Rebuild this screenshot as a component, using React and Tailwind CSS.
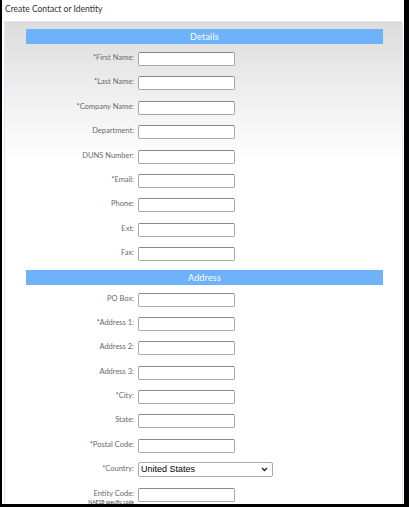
const detailRows = [
  "*First Name:",
  "*Last Name:",
  "*Company Name:",
  "Department:",
  "DUNS Number:",
  "*Email:",
  "Phone:",
  "Ext:",
  "Fax:",
];

const addressRows = [
  "PO Box:",
  "*Address 1:",
  "Address 2:",
  "Address 3:",
  "*City:",
  "State:",
  "*Postal Code:",
];

function SectionHeader({ title, className = "" }) {
  return (
    <div className={`ml-[21px] mr-[19px] h-[15px] bg-[#6eb2fa] text-white text-[9px] leading-[15px] text-center tracking-[0.2px] ${className}`}>
      {title}
    </div>
  );
}

function Row({ label, children, sub }) {
  return (
    <div className="flex h-[24.4px] shrink-0 items-start">
      <div className="w-[133px] pr-[4px] text-right leading-[10px] pt-[1px]">
        <div className="text-[7.5px] text-[#6a6a6a]">{label}</div>
        {sub && <div className="text-[5px] text-[#444] leading-[6px]">{sub}</div>}
      </div>
      {children || (
        <input
          type="text"
          className="w-[97px] h-[14px] bg-white border border-[#a8a8a8] border-t-[#888] rounded-[2px] outline-none"
        />
      )}
    </div>
  );
}

export default function App() {
  return (
    <div className="w-[409px] h-[507px] bg-black pl-[2px] pr-[5px] pb-[3px] font-['Lato',sans-serif]">
      <div className="h-full bg-white pl-[2px] pr-px flex flex-col overflow-hidden">
        <div className="h-[21px] shrink-0 pt-[3px] pl-[1px] text-[8.5px] text-[#333] leading-[12px]">
          Create Contact or Identity
        </div>
        <div className="flex-1 shrink-0 border border-[#e4e4f2] border-b-0 bg-[linear-gradient(to_bottom,#dcdcdc_0px,#ececec_60px,#ffffff_140px)] pt-[7px]">
          <SectionHeader title="Details" />
          <div className="pt-[8px]">
            {detailRows.map((l) => (
              <Row key={l} label={l} />
            ))}
          </div>
          <SectionHeader title="Address" className="-mt-[2px]" />
          <div className="pt-[8px]">
            {addressRows.map((l) => (
              <Row key={l} label={l} />
            ))}
            <Row label="*Country:">
              <div className="w-[135px] h-[15px] -mt-[1px] bg-white border border-[#aaa] rounded-[2px] flex items-center justify-between pl-[2px] pr-[4px] text-[9px] text-black font-['Liberation_Sans',sans-serif]">
                <span>United States</span>
                <svg width="7" height="5" viewBox="0 0 7 5">
                  <path d="M1 1 L3.5 3.5 L6 1" fill="none" stroke="#222" strokeWidth="1.4" />
                </svg>
              </div>
            </Row>
            <Row label="Entity Code:" sub="NAESB specific code" />
          </div>
        </div>
      </div>
    </div>
  );
}
